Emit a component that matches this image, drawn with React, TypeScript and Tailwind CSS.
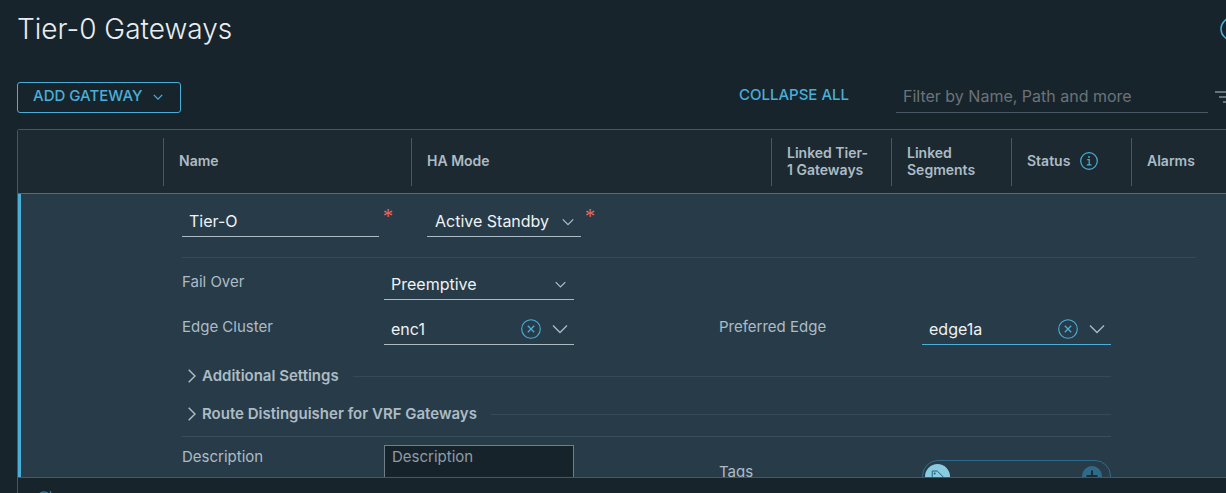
import type { ReactNode } from "react";

function Chevron({ className }: { className: string }) {
  return (
    <svg viewBox="0 0 16 10" className={className} fill="none" stroke="currentColor" aria-hidden="true">
      <path d="M1 1.5l7 7 7-7" strokeWidth="1.3" vectorEffect="non-scaling-stroke" />
    </svg>
  );
}

function HeaderCell({ children }: { children?: ReactNode }) {
  return (
    <th scope="col" className="h-16 border-b border-[#5a6873] p-0 text-left align-middle text-sm leading-[17px] font-semibold text-[#adbbc4]">
      <div className="flex h-12 items-center border-l border-[#485764] pb-0.5 pl-[15px]">{children}</div>
    </th>
  );
}

function ClearableSelect({ id, value, focused }: { id: string; value: string; focused?: boolean }) {
  return (
    <div className={`flex h-8 items-center border-b pr-1.5 ${focused ? "border-[#49afd9]" : "border-[#acbac3]"}`}>
      <input id={id} defaultValue={value} className="min-w-0 flex-1 bg-transparent pl-[7px] text-base text-[#eef2f4] outline-none" />
      <button type="button" aria-label={`Clear ${value}`} className="mr-[11px] text-[#49afd9]">
        <svg viewBox="0 0 20 20" className="size-5" fill="none" stroke="currentColor" aria-hidden="true">
          <circle cx="10" cy="10" r="9.3" strokeWidth="1.1" />
          <path d="M6.8 6.8l6.4 6.4M13.2 6.8l-6.4 6.4" strokeWidth="1.3" />
        </svg>
      </button>
      <button type="button" aria-label={`Open ${value} options`} className="text-[#adbbc4]">
        <Chevron className="h-2.5 w-4" />
      </button>
    </div>
  );
}

function Section({ title }: { title: string }) {
  return (
    <div className="flex h-[38px] items-center">
      <button type="button" className="flex items-center gap-1.5 pl-1.5 text-[15px] leading-5 font-semibold text-[#adbbc4]">
        <svg viewBox="0 0 8 14" className="h-3.5 w-2" fill="none" stroke="currentColor" strokeWidth="1.5" aria-hidden="true">
          <path d="M.7 .7L7 7L.7 13.3" />
        </svg>
        {title}
      </button>
      <div className="ml-3.5 h-px flex-1 bg-[#364959]" />
    </div>
  );
}

function Required() {
  return <span className="pl-1 font-['Liberation_Serif',serif] text-xl leading-5 text-[#f0695f]">*</span>;
}

const row =
  "grid grid-cols-[minmax(0,202fr)_minmax(0,190fr)_minmax(0,145fr)_minmax(0,203fr)_minmax(0,189fr)]";
const label = "text-[15px] leading-5 text-[#adbbc4]";

export default function App() {
  return (
    <div className="flex h-screen flex-col overflow-hidden bg-[#18242b] pl-[17px] font-[Inter,sans-serif]">
      <header className="flex h-[82px] shrink-0 items-start justify-between overflow-hidden pt-[13px]">
        <h1 className="text-[28px] leading-8 font-light text-[#eaedf0]">Tier-0 Gateways</h1>
        <button type="button" aria-label="Help" className="-mr-[18px] pt-1 text-[#49afd9]">
          <svg viewBox="0 0 24 24" className="size-6" fill="none" stroke="currentColor" strokeWidth="1.5" aria-hidden="true">
            <circle cx="12" cy="12" r="11" />
            <path d="M9 9.5a3 3 0 1 1 4.5 2.5c-1 .6-1.5 1.1-1.5 2.2M12 16v1.5" />
          </svg>
        </button>
      </header>

      <div className="flex h-[47px] shrink-0 items-start">
        <button type="button" className="flex h-[31px] w-[164px] items-center justify-between rounded-[3px] border border-[#49afd9] pr-[17px] pb-0.5 pl-[15px] text-[15px] font-medium text-[#49afd9]">
          ADD GATEWAY
          <Chevron className="h-1.5 w-2.5" />
        </button>
        <button type="button" className="mr-[47px] ml-auto h-[27px] text-[15px] font-medium text-[#49afd9]">
          COLLAPSE ALL
        </button>
        <input
          type="text"
          aria-label="Filter gateways"
          placeholder="Filter by Name, Path and more"
          className="h-[31px] w-[312px] border-b border-[#485764] bg-transparent px-[7px] pb-0.5 text-base text-[#adbbc4] outline-none placeholder:text-[#6b7379]"
        />
        <button type="button" aria-label="Filter options" className="ml-[7px] w-[11px] overflow-hidden pt-[9px] text-[#66747e]">
          <svg viewBox="0 0 22 12" className="h-3 w-[22px] max-w-none" fill="none" stroke="currentColor" strokeWidth="2" aria-hidden="true">
            <path d="M0 1h22M4 6h14M8 11h6" />
          </svg>
        </button>
      </div>

      <main className="flex min-h-0 flex-1 flex-col rounded-tl-[3px] border-t border-l border-[#485764]">
        <div className="min-h-0 flex-1 overflow-hidden">
          <table className="w-full table-fixed border-separate border-spacing-0">
            <colgroup>
              <col className="w-[145px]" />
              <col className="w-[248px]" />
              <col />
              <col className="w-[120px]" />
              <col className="w-[120px]" />
              <col className="w-[120px]" />
              <col className="w-[95px]" />
            </colgroup>
            <thead className="bg-[#1c2931]">
              <tr>
                <td className="border-b border-[#5a6873] p-0" />
                <HeaderCell>Name</HeaderCell>
                <HeaderCell>HA Mode</HeaderCell>
                <HeaderCell>
                  <span>Linked Tier-<br />1 Gateways</span>
                </HeaderCell>
                <HeaderCell>Linked<br />Segments</HeaderCell>
                <HeaderCell>
                  Status
                  <svg viewBox="0 0 18 18" className="ml-2.5 size-[18px] text-[#49afd9]" fill="none" stroke="currentColor" aria-hidden="true">
                    <circle cx="9" cy="9" r="8.3" strokeWidth="1.2" />
                    <path d="M7.2 7.7h2v5M6.8 12.9h4.6" strokeWidth="1.2" />
                    <circle cx="9" cy="5" r=".9" fill="currentColor" stroke="none" />
                  </svg>
                </HeaderCell>
                <HeaderCell>Alarms</HeaderCell>
              </tr>
            </thead>
            <tbody className="bg-[#283b49]">
              <tr>
                <td rowSpan={2} className="border-l-[3px] border-[#49afd9] p-0" />
                <td className="h-[63px] p-0 pt-3 pl-[19px] align-top">
                  <div className="flex items-start">
                    <input aria-label="Name" defaultValue="Tier-O" required className="h-[31px] w-[197px] border-b border-[#acbac3] bg-transparent px-[7px] text-base text-[#eef2f4] outline-none" />
                    <Required />
                  </div>
                </td>
                <td colSpan={5} className="p-0 pt-3 pl-4 align-top">
                  <div className="flex items-start">
                    <div className="relative w-[154px]">
                      <select aria-label="HA Mode" className="h-[31px] w-full appearance-none border-b border-[#acbac3] bg-transparent pl-2 text-base text-[#eef2f4] outline-none">
                        <option>Active Standby</option>
                        <option>Active Active</option>
                      </select>
                      <Chevron className="pointer-events-none absolute top-3 right-[7px] h-2 w-3 text-[#adbbc4]" />
                    </div>
                    <Required />
                  </div>
                </td>
              </tr>
              <tr>
                <td colSpan={6} className="p-0 pl-[19px] align-top">
                  <div className="mr-[30px] border-t border-[#364959]" />
                  <form className="mr-[115px] pb-8">
                    <div className={`${row} pt-[11px]`}>
                      <label htmlFor="failover" className={`${label} pt-[3px]`}>Fail Over</label>
                      <div className="relative">
                        <select id="failover" className="h-[31px] w-full appearance-none border-b border-[#acbac3] bg-transparent pl-[7px] text-base text-[#eef2f4] outline-none">
                          <option>Preemptive</option>
                          <option>Non Preemptive</option>
                        </select>
                        <Chevron className="pointer-events-none absolute top-3 right-2 h-[7px] w-[11px] text-[#adbbc4]" />
                      </div>
                    </div>
                    <div className={`${row} pt-[13px]`}>
                      <label htmlFor="cluster" className={`${label} pt-1`}>Edge Cluster</label>
                      <ClearableSelect id="cluster" value="enc1" />
                      <div />
                      <label htmlFor="preferred" className={`${label} pt-1`}>Preferred Edge</label>
                      <ClearableSelect id="preferred" value="edge1a" focused />
                    </div>
                    <div className="h-3" />
                    <Section title="Additional Settings" />
                    <Section title="Route Distinguisher for VRF Gateways" />
                    <div className="mt-[3px] border-t border-[#3d4e5b]" />
                    <div className={`${row} pt-2`}>
                      <label htmlFor="description" className={`${label} pt-0.5`}>Description</label>
                      <textarea id="description" placeholder="Description" className="h-14 resize-none border border-[#6f7f8a] bg-[#17232b] px-[7px] py-px text-[15px] leading-5 text-[#eef2f4] outline-none placeholder:text-[#8f9ca5]" />
                      <div />
                      <label htmlFor="tags" className={`${label} pt-[17px]`}>Tags</label>
                      <div className="mt-[15px] flex h-8 items-center rounded-full border border-[#2d6b8a] px-0.5">
                        <svg viewBox="0 0 25 25" className="size-[25px] shrink-0" aria-hidden="true">
                          <circle cx="12.5" cy="12.5" r="12.5" fill="#89cbdf" />
                          <path d="M7.2 7h5l7.3 7.2-5.5 5.6-6.8-7.5z" fill="none" stroke="#28607c" />
                          <circle cx="9.7" cy="9.5" r="1" fill="#28607c" />
                        </svg>
                        <input id="tags" className="min-w-0 flex-1 bg-transparent px-2 text-[#eef2f4] outline-none" />
                        <button type="button" aria-label="Add tag" className="mr-1.5">
                          <svg viewBox="0 0 20 20" className="size-5" aria-hidden="true">
                            <circle cx="10" cy="10" r="10" fill="#2f6a88" />
                            <path d="M10 4.5v11M4.5 10h11" stroke="#1b2d38" strokeWidth="2" />
                          </svg>
                        </button>
                      </div>
                    </div>
                  </form>
                </td>
              </tr>
            </tbody>
          </table>
        </div>
        <footer className="h-4 shrink-0 overflow-hidden border-t border-[#485764] pt-3 pl-[18px]">
          <button type="button" aria-label="Refresh" className="block text-[#347e9d]">
            <svg viewBox="0 0 16 16" className="size-4" fill="none" stroke="currentColor" strokeWidth="1.3" aria-hidden="true">
              <path d="M14 6A6.5 6.5 0 1 0 14.5 9M14.5 1v5h-5" />
            </svg>
          </button>
        </footer>
      </main>
    </div>
  );
}
